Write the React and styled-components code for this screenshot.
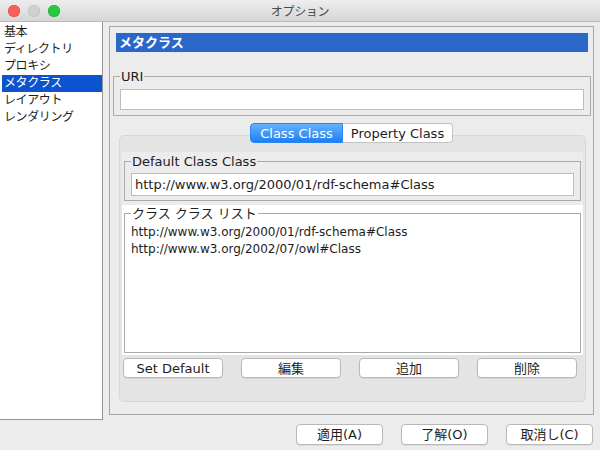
import React from 'react';
import styled, { createGlobalStyle } from 'styled-components';

const GlobalStyle = createGlobalStyle`
  html, body {
    margin: 0;
    padding: 0;
    background: #ececec;
  }
  body {
    font-family: "DejaVu Sans", "Noto Sans CJK JP", sans-serif;
  }
`;

const Window = styled.div`
  width: 600px;
  height: 450px;
  background: #ececec;
  display: flex;
  flex-direction: column;
  overflow: hidden;
  color: #1d1d1d;
  font-size: 13px;
`;

const TitleBar = styled.div`
  height: 22px;
  box-sizing: border-box;
  border-bottom: 1px solid #b9b9b9;
  background: linear-gradient(#ededed, #d6d6d6);
  display: grid;
  grid-template-columns: 1fr auto 1fr;
  align-items: center;
`;

const Lights = styled.div`
  display: flex;
  gap: 8px;
  padding-left: 8px;
`;

const Light = styled.span`
  width: 12px;
  height: 12px;
  border-radius: 50%;
  background: ${(p) => p.color};
  box-shadow: inset 0 0 0 0.5px ${(p) => p.edge};
`;

const Title = styled.div`
  font-size: 12px;
  color: #4a4a4a;
  letter-spacing: -0.3px;
`;

const Body = styled.div`
  display: flex;
  height: 398px;
`;

const SideList = styled.div`
  width: 103px;
  box-sizing: border-box;
  background: #fff;
  border-right: 1px solid #949494;
  border-bottom: 1px solid #949494;
  padding: 2px 0 0 2px;
`;

const SideItem = styled.div`
  height: 17px;
  line-height: 17px;
  padding-left: 2px;
  font-size: 12px;
  letter-spacing: -0.4px;
  background: ${(p) => (p.selected ? '#0b53cf' : 'transparent')};
  color: ${(p) => (p.selected ? '#fff' : '#1d1d1d')};
`;

const Panel = styled.div`
  margin: 4px 0 0 6px;
  width: 485px;
  height: 389px;
  box-sizing: border-box;
  border: 1px solid #a6a6a6;
  display: flex;
  flex-direction: column;
`;

const Header = styled.div`
  margin: 5px 4px 0 5px;
  height: 21px;
  box-sizing: border-box;
  border: 1px solid #e6ecf7;
  background: #2b66c9;
  color: #fff;
  font-weight: bold;
  font-size: 13px;
  line-height: 19px;
  padding-left: 3px;
`;

const Group = styled.fieldset`
  margin: ${(p) => p.margin || '0'};
  padding: ${(p) => p.pad || '3px 6px 4px'};
  border: 1px solid #a9a9a9;
  min-width: 0;
  box-sizing: border-box;
  height: ${(p) => p.h || 'auto'};
`;

const Legend = styled.legend`
  padding: 1px 1px 0;
  font-size: 13px;
  line-height: ${(p) => p.lh || 17}px;
  color: #1d1d1d;
`;

const TextField = styled.div`
  height: ${(p) => p.h || '21px'};
  box-sizing: border-box;
  border: 1px solid #bdbdbd;
  background: #fff;
  font-size: 13px;
  line-height: 20px;
  padding: 1px 0 0 3px;
`;

const TabStrip = styled.div`
  display: flex;
  justify-content: center;
  margin-top: 7px;
  position: relative;
  z-index: 1;
`;

const Tab = styled.div`
  width: ${(p) => p.w}px;
  height: 20px;
  box-sizing: border-box;
  text-align: center;
  font-size: 13px;
  line-height: 17px;
  padding-top: 1px;
  border: 1px solid ${(p) => (p.active ? '#2c86f2' : '#c2c2c2')};
  border-left: ${(p) => (p.active ? '' : 'none')};
  border-radius: ${(p) => (p.active ? '4px 0 0 4px' : '0 4px 4px 0')};
  background: ${(p) => (p.active ? 'linear-gradient(#67b1fb, #1c7ff6)' : '#fff')};
  color: ${(p) => (p.active ? '#fff' : '#1d1d1d')};
`;

const Pane = styled.div`
  margin: -8px 7px 0 9px;
  height: 267px;
  box-sizing: border-box;
  border: 1px solid #d7d7d7;
  border-radius: 5px;
  background: #e4e4e4;
  padding: 16px 2px 0 2px;
  display: flex;
  flex-direction: column;
`;

const DefaultSection = styled.div`
  background: #ececec;
  padding: 0 2px 4px;
`;

const ListSection = styled.div`
  background: #fff;
  height: 150px;
  box-sizing: border-box;
  padding: 0 2px 2px;
`;

const ListItem = styled.div`
  font-size: 12px;
  line-height: 17px;
`;

const ButtonRow = styled.div`
  display: flex;
  gap: 18px;
  margin-top: 3px;
  padding-left: 1px;
`;

const Button = styled.div`
  width: ${(p) => p.w}px;
  height: ${(p) => p.h || 20}px;
  box-sizing: border-box;
  border: 1px solid #b8b8b8;
  border-radius: 4px;
  background: #fff;
  box-shadow: 0 1px 0 rgba(0, 0, 0, 0.06);
  font-size: 13px;
  padding-top: 1px;
  line-height: ${(p) => (p.h || 20) - 3}px;
  text-align: center;
  color: #1d1d1d;
`;

const Footer = styled.div`
  display: flex;
  justify-content: flex-end;
  gap: 18px;
  padding: 4px 7px 0 0;
`;

const sideItems = ['基本', 'ディレクトリ', 'プロキシ', 'メタクラス', 'レイアウト', 'レンダリング'];
const classes = ['http://www.w3.org/2000/01/rdf-schema#Class', 'http://www.w3.org/2002/07/owl#Class'];

export default function App() {
  return (
    <Window>
      <GlobalStyle />
      <TitleBar>
        <Lights>
          <Light color="#fc5f57" edge="#e0443e" />
          <Light color="#d0d0d0" edge="#bcbcbc" />
          <Light color="#2ac840" edge="#1ea932" />
        </Lights>
        <Title>オプション</Title>
        <div />
      </TitleBar>
      <Body>
        <SideList>
          {sideItems.map((s) => (
            <SideItem key={s} selected={s === 'メタクラス'}>{s}</SideItem>
          ))}
        </SideList>
        <Panel>
          <Header>メタクラス</Header>
          <Group margin="14px 2px 0 3px" pad="4px 6px 5px">
            <Legend>URI</Legend>
            <TextField />
          </Group>
          <TabStrip>
            <Tab active w={93}>Class Class</Tab>
            <Tab w={110}>Property Class</Tab>
          </TabStrip>
          <Pane>
            <DefaultSection>
              <Group>
                <Legend>Default Class Class</Legend>
                <TextField h="22">http://www.w3.org/2000/01/rdf-schema#Class</TextField>
              </Group>
            </DefaultSection>
            <ListSection>
              <Group h="100%" pad="3px 6px 0">
                <Legend lh={15}>クラス クラス リスト</Legend>
                {classes.map((c) => (
                  <ListItem key={c}>{c}</ListItem>
                ))}
              </Group>
            </ListSection>
            <ButtonRow>
              <Button w={100}>Set Default</Button>
              <Button w={100}>編集</Button>
              <Button w={100}>追加</Button>
              <Button w={100}>削除</Button>
            </ButtonRow>
          </Pane>
        </Panel>
      </Body>
      <Footer>
        <Button w={87} h={21}>適用(A)</Button>
        <Button w={87} h={21}>了解(O)</Button>
        <Button w={87} h={21}>取消し(C)</Button>
      </Footer>
    </Window>
  );
}
